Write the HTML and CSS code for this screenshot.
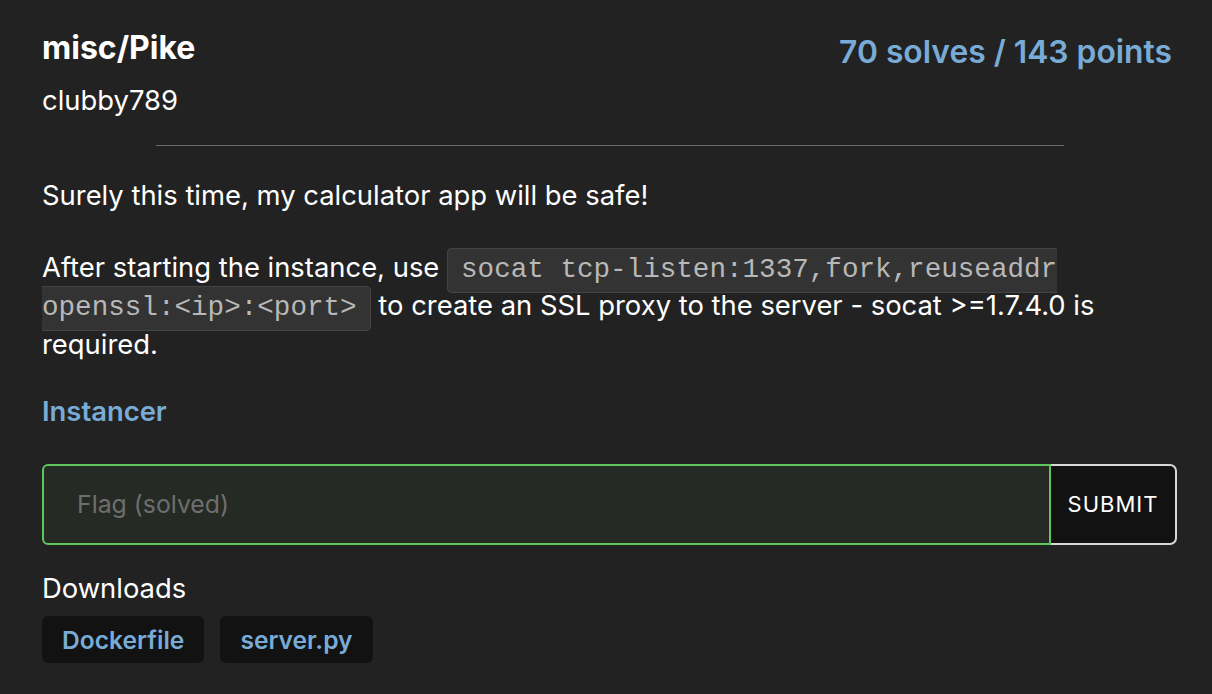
FILE: index.html
```html
<!DOCTYPE html>
<html>
<head>
<meta charset="utf-8">
<link rel="stylesheet" href="styles.css">
</head>
<body>
<div class="page">
  <div class="header">
    <div class="titles">
      <h1 class="title">misc/Pike</h1>
      <div class="author">clubby789</div>
    </div>
    <div class="stats">70 solves / 143 points</div>
  </div>
  <hr class="rule">
  <div class="desc">
    <p class="para">Surely this time, my calculator app will be safe!</p>
    <p class="para">After starting the instance, use <code class="code">socat tcp-listen:1337,fork,reuseaddr openssl:&lt;ip&gt;:&lt;port&gt;</code> to create an SSL proxy to the server - socat &gt;=1.7.4.0 is required.</p>
  </div>
  <div class="instancer">Instancer</div>
  <form class="flag-form">
    <input class="flag-input" type="text" placeholder="Flag (solved)">
    <button class="submit" type="button">SUBMIT</button>
  </form>
  <div class="downloads-label">Downloads</div>
  <div class="downloads">
    <a class="dl">Dockerfile</a>
    <a class="dl">server.py</a>
  </div>
</div>
</body>
</html>
```

FILE: styles.css
```css
html, body {
  margin: 0;
  padding: 0;
  background: #222222;
}
body {
  font-family: Inter, "Noto Sans", sans-serif;
  color: #ffffff;
  font-size: 27.4px;
}
.page {
  padding: 26px 35px 0 42px;
}
.header {
  display: flex;
  justify-content: space-between;
  align-items: flex-start;
}
.title {
  margin: 0;
  font-size: 32px;
  font-weight: 700;
  line-height: 44px;
}
.author {
  margin-top: 11px;
  line-height: 38px;
}
.stats {
  margin-top: 6px;
  margin-right: 5px;
  color: #78acd7;
  font-size: 31.8px;
  font-weight: 600;
  line-height: 40px;
}
.rule {
  width: 80%;
  margin: 26px auto 30px;
  border: none;
  border-top: 1px solid #6a6a6a;
  height: 0;
}
.para {
  margin: 0;
  line-height: 38.5px;
}
.para + .para {
  margin-top: 33px;
}
.code {
  font-family: "Liberation Mono", monospace;
  font-size: 27.6px;
  line-height: 30px;
  color: #b8b8b8;
  background: #333333;
  border: 1px solid #444444;
  border-radius: 5px;
  padding: 5px 13px 7px;
}
.instancer {
  margin-top: 29px;
  color: #78acd7;
  font-weight: 600;
  line-height: 38.5px;
}
.flag-form {
  display: flex;
  margin-top: 33px;
  height: 81px;
}
.flag-input {
  flex: 1;
  min-width: 0;
  box-sizing: border-box;
  height: 81px;
  background: #262a24;
  border: 2px solid #5dc75d;
  border-radius: 6px 0 0 6px;
  padding: 0 33px;
  font-family: Inter, "Noto Sans", sans-serif;
  font-size: 24.8px;
  color: #ffffff;
  outline: none;
}
.flag-input::placeholder {
  color: #6e6e6e;
}
.submit {
  box-sizing: border-box;
  width: 126px;
  height: 81px;
  background: #121212;
  color: #ffffff;
  border: 2px solid #d8d8d8;
  border-left: none;
  border-radius: 0 7px 7px 0;
  font-family: Inter, "Noto Sans", sans-serif;
  font-size: 22px;
  letter-spacing: 1px;
  padding: 0;
}
.downloads-label {
  margin-top: 24px;
  line-height: 38.5px;
}
.downloads {
  display: flex;
  gap: 16px;
  margin-top: 9px;
}
.dl {
  display: flex;
  align-items: center;
  height: 47px;
  padding: 0 20px;
  background: #121212;
  border-radius: 6px;
  color: #78acd7;
  font-weight: 600;
  font-size: 24.6px;
}
```
